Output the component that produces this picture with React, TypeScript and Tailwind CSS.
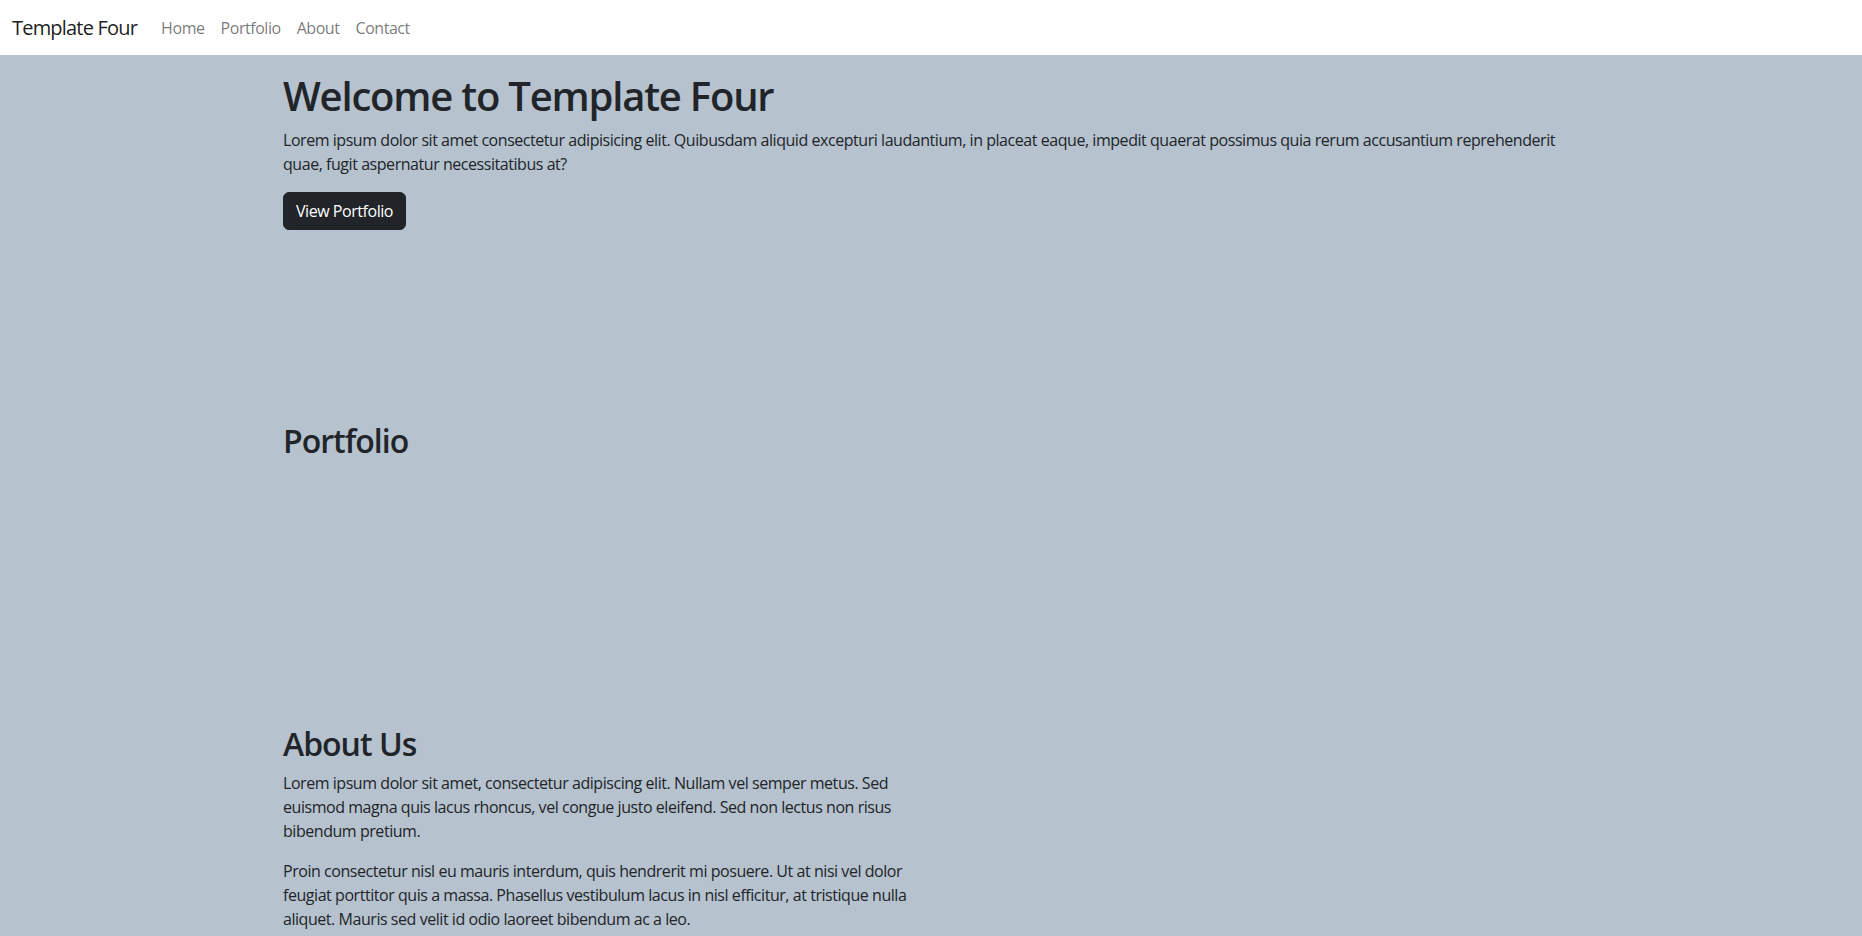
import React from "react";

export default function App() {
  return (
    <div className="min-h-screen bg-[#b6c2ce] text-[#212529] [font-family:'Open_Sans','Noto_Sans',Arial,sans-serif]">
      <nav className="bg-white h-[55px] flex items-center px-3">
        <a className="text-[20px] leading-[30px] text-black/90 mr-4 tracking-[-0.8px]">Template Four</a>
        <ul className="flex items-center">
          {["Home", "Portfolio", "About", "Contact"].map((l) => (
            <li key={l}>
              <a className="block px-2 py-2 text-[16px] leading-6 text-black/55 tracking-[-0.45px]">{l}</a>
            </li>
          ))}
        </ul>
      </nav>

      <main className="w-[1320px] mx-auto px-3 tracking-[-0.45px]">
        <section className="pt-[17px]">
          <h1 className="text-[40px] leading-[48px] font-semibold mb-2 tracking-[-1.2px]">Welcome to Template Four</h1>
          <p className="text-[16px] leading-6 mb-4 whitespace-nowrap">
            Lorem ipsum dolor sit amet consectetur adipisicing elit. Quibusdam aliquid excepturi laudantium, in placeat eaque, impedit quaerat possimus quia rerum accusantium reprehenderit
            <br />
            quae, fugit aspernatur necessitatibus at?
          </p>
          <button className="bg-[#212529] text-white text-[16px] leading-6 px-3 py-1.5 border border-[#212529] rounded-md tracking-[-0.45px]">
            View Portfolio
          </button>
        </section>

        <section className="pt-[192px]">
          <h2 className="text-[32px] leading-[38px] font-semibold mb-2 tracking-[-1px]">Portfolio</h2>
        </section>

        <section className="pt-[257px]">
          <h2 className="text-[32px] leading-[38px] font-semibold mb-2 tracking-[-1px]">About Us</h2>
          <div className="w-1/2 pr-3">
            <p className="text-[16px] leading-6 mb-4 whitespace-nowrap">
              Lorem ipsum dolor sit amet, consectetur adipiscing elit. Nullam vel semper metus. Sed
              <br />
              euismod magna quis lacus rhoncus, vel congue justo eleifend. Sed non lectus non risus
              <br />
              bibendum pretium.
            </p>
            <p className="text-[16px] leading-6 mb-4 whitespace-nowrap">
              Proin consectetur nisl eu mauris interdum, quis hendrerit mi posuere. Ut at nisi vel dolor
              <br />
              feugiat porttitor quis a massa. Phasellus vestibulum lacus in nisl efficitur, at tristique nulla
              <br />
              aliquet. Mauris sed velit id odio laoreet bibendum ac a leo.
            </p>
          </div>
        </section>
      </main>
    </div>
  );
}
